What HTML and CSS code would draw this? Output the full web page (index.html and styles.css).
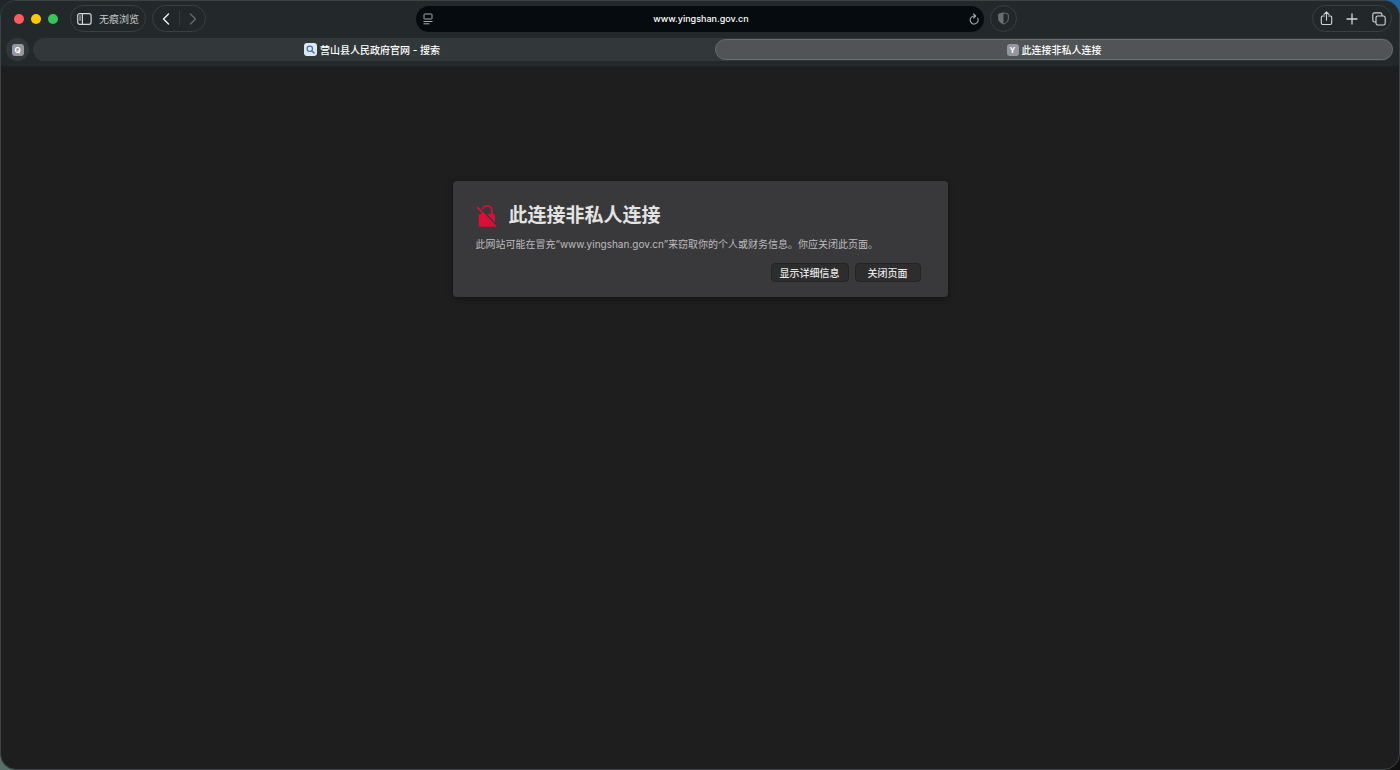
FILE: index.html
```html
<!DOCTYPE html>
<html lang="zh">
<head>
<meta charset="utf-8">
<meta name="viewport" content="width=device-width, initial-scale=1">
<title>此连接非私人连接</title>
<link rel="stylesheet" href="styles.css">
</head>
<body>
<div class="window">
  <header class="chrome">
    <div class="toolbar">
      <div class="toolbar-left">
        <div class="lights">
          <button class="light light-close" aria-label="关闭"></button>
          <button class="light light-min" aria-label="最小化"></button>
          <button class="light light-zoom" aria-label="缩放"></button>
        </div>
        <button class="pill private">
          <svg width="15" height="12" viewBox="0 0 15 12" fill="none" stroke="currentColor" stroke-width="1.2"><rect x=".7" y=".7" width="13.4" height="10.6" rx="2"/><path d="M5.4 .7v10.6M2.3 3h1.5M2.3 4.9h1.5M2.3 6.8h1.5"/></svg>
          <span>无痕浏览</span>
        </button>
        <div class="pill nav">
          <button class="nav-button" aria-label="后退"><svg width="8" height="12" viewBox="0 0 8 12" fill="none" stroke="currentColor" stroke-width="1.4" stroke-linecap="round" stroke-linejoin="round"><path d="M6.5 1 1.5 6l5 5"/></svg></button>
          <button class="nav-button nav-forward" aria-label="前进" disabled><svg width="8" height="12" viewBox="0 0 8 12" fill="none" stroke="currentColor" stroke-width="1.4" stroke-linecap="round" stroke-linejoin="round"><path d="m1.5 1 5 5-5 5"/></svg></button>
        </div>
      </div>
      <div class="address">
        <button class="icon-button" aria-label="页面菜单"><svg width="10" height="12" viewBox="0 0 10 12" fill="none" stroke="currentColor"><rect x="1" y="1" width="8" height="5" rx=".6"/><path d="M.5 8.5h9M.5 10.8h6"/></svg></button>
        <input class="address-input" type="text" value="www.yingshan.gov.cn" aria-label="地址">
        <button class="icon-button" aria-label="重新载入"><svg width="10" height="12" viewBox="0 0 10 12" fill="none" stroke="currentColor" stroke-width="1.1" stroke-linecap="round" stroke-linejoin="round"><path d="M8.7 5.2A4 4 0 1 1 5 3h1M4.6 1l2 2-2 2"/></svg></button>
      </div>
      <div class="toolbar-right">
        <button class="pill shield" aria-label="隐私报告"><svg width="11" height="13" viewBox="0 0 11 13"><path d="M5.5 .8 10.3 2.2v4.600c0 2.400-2.100 4.200-4.800 5.300C2.800 11 .7 9.200 .7 6.800V2.200Z" fill="none" stroke="currentColor"/><path d="M5.500 .8v11.300C2.800 11 .7 9.200 .7 6.800V2.200Z" fill="currentColor"/></svg></button>
        <div class="pill actions">
          <button class="icon-button" aria-label="共享"><svg width="13" height="15" viewBox="0 0 13 15" fill="none" stroke="currentColor" stroke-width="1.1" stroke-linecap="round" stroke-linejoin="round"><path d="M4.3 5H2.7Q1.3 5 1.3 6.4v5.7q0 1.4 1.4 1.4h7.6q1.4 0 1.4-1.4V6.4Q11.7 5 10.3 5H8.7M6.5 9.3V1M4 3.3 6.5 .9 9 3.3"/></svg></button>
          <button class="icon-button" aria-label="新建标签页"><svg width="12" height="12" viewBox="0 0 12 12" fill="none" stroke="currentColor" stroke-width="1.3" stroke-linecap="round"><path d="M6 1v10M1 6h10"/></svg></button>
          <button class="icon-button" aria-label="标签页概览"><svg width="14" height="14" viewBox="0 0 14 14" fill="none" stroke="currentColor" stroke-width="1.1"><rect x="4" y="4" width="9.2" height="9" rx="1.8"/><path d="M4 10H2.6Q.8 10 .8 8.2V2.7Q.8 .9 2.6 .9h5.6Q10 .9 10 2.7V4"/></svg></button>
        </div>
      </div>
    </div>
    <nav class="tabbar">
      <button class="pinned" aria-label="Q"><span class="favicon">Q</span></button>
      <div class="tabs">
        <button class="tab"><svg width="13" height="13" viewBox="0 0 13 13"><rect width="13" height="13" rx="3" fill="#dfe8f1"/><circle cx="5.8" cy="5.8" r="2.7" fill="none" stroke="#3b72b8" stroke-width="1.2"/><path d="m7.9 7.9 2.2 2.2" stroke="#3b72b8" stroke-width="1.4" stroke-linecap="round"/></svg>营山县人民政府官网 - 搜索</button>
        <button class="tab tab-active"><span class="favicon">Y</span>此连接非私人连接</button>
      </div>
    </nav>
  </header>
  <main class="page">
    <section class="warning">
      <div class="warning-title">
        <svg width="22" height="24" viewBox="0 0 22 24"><path d="M6.3 11V6.700a4.800 4.800 0 0 1 9.600 0V11" fill="none" stroke="#d90f38" stroke-width="1.8"/><rect x="2.7" y="10" width="16.3" height="12.7" rx="1.8" fill="#d90f38"/><path d="m2.200 1.900 19 20.500" stroke="#39393b" stroke-width="2"/><path d="M1.200 3.200 20.300 23" stroke="#d90f38" stroke-width="1.7"/></svg>
        <h1>此连接非私人连接</h1>
      </div>
      <p>此网站可能在冒充“www.yingshan.gov.cn”来窃取你的个人或财务信息。你应关闭此页面。</p>
      <div class="warning-buttons">
        <button class="button">显示详细信息</button>
        <button class="button button-wide">关闭页面</button>
      </div>
    </section>
  </main>
</div>
</body>
</html>
```
FILE: styles.css
```css
* {
  box-sizing: border-box;
}

body {
  margin: 0;
  background: linear-gradient(to right, #20262a 50%, #2268a0 50%) top / 100% 50% no-repeat,
    linear-gradient(to right, #58706a 50%, #101010 50%) bottom / 100% 50% no-repeat;
  font-family: Inter, "Noto Sans CJK SC", sans-serif;
  font-size: 10px;
  color: #fff;
}

button,
input {
  margin: 0;
  padding: 0;
  border: 0;
  background: none;
  color: inherit;
  font: inherit;
}

svg {
  display: block;
  flex: none;
}

.window {
  display: flex;
  flex-direction: column;
  min-height: 100vh;
  border: 1px solid #3d4344;
  border-radius: 16px;
  background: #1e1e1e;
  overflow: hidden;
}

.chrome {
  background: #23292b;
  border-bottom: 1px solid #1b1f20;
}

.toolbar {
  display: grid;
  grid-template-columns: 1fr 41% 1fr;
  align-items: center;
  gap: 6px;
  padding: 4px 7px;
}

.toolbar-left,
.toolbar-right,
.lights,
.pill {
  display: flex;
  align-items: center;
}

.toolbar-left {
  gap: 6px;
  padding-left: 6px;
}

.toolbar-right {
  justify-content: space-between;
}

.lights {
  gap: 7px;
  padding-right: 6px;
}

.light {
  width: 10px;
  height: 10px;
  border-radius: 50%;
}

.light-close {
  background: #ff5b60;
}

.light-min {
  background: #fdc600;
}

.light-zoom {
  background: #35c759;
}

.pill {
  height: 27px;
  border: 1px solid #394143;
  border-radius: 14px;
  background: #22282a;
}

.private {
  gap: 7px;
  padding: 0 6px;
  color: #c5c8c9;
}

.private svg {
  color: #d4d6d7;
}

.nav-button {
  display: grid;
  place-items: center;
  width: 26px;
  height: 15px;
  color: #f0f2f2;
}

.nav-forward {
  border-left: 1px solid #34393b;
  color: #646a6c;
}

.address {
  display: flex;
  align-items: center;
  height: 26px;
  padding: 0 4px 0 6px;
  border-radius: 13px;
  background: #050b0e;
}

.icon-button {
  display: grid;
  place-items: center;
  flex: none;
  width: 12px;
  height: 20px;
  color: #a5a9aa;
}

.address-input {
  flex: 1;
  min-width: 0;
  text-align: center;
  font-size: 9px;
  font-weight: 500;
  outline: 0;
}

.shield {
  justify-content: center;
  width: 27px;
  color: #6a7072;
}

.actions {
  gap: 14px;
  padding: 0 7px;
}

.actions .icon-button {
  color: #d4d6d7;
}

.tabbar {
  display: flex;
  align-items: center;
  gap: 4px;
  padding: 2px 6px 5px 5px;
}

.pinned {
  display: grid;
  place-items: center;
  width: 23px;
  height: 23px;
  border-radius: 50%;
  background: #32383a;
}

.favicon {
  display: grid;
  place-items: center;
  width: 12px;
  height: 12px;
  border-radius: 3px;
  background: #9496a0;
  color: #fff;
  font-size: 8px;
  font-weight: 700;
  line-height: 12px;
}

.tabs {
  display: grid;
  grid-template-columns: 1fr 1fr;
  column-gap: 4px;
  flex: 1;
  border-radius: 12px;
  background: #32383a;
}

.tab {
  display: flex;
  align-items: center;
  justify-content: center;
  gap: 3px;
  height: 23px;
  font-weight: 500;
}

.tab-active {
  height: 21px;
  align-self: center;
  border: 1px solid #6a6f71;
  border-radius: 11px;
  background: #505456;
}

.page {
  flex: 1;
  padding: 114px 16px 16px;
}

.warning {
  max-width: 495px;
  margin: 0 auto;
  padding: 22px 27px 15px 23px;
  border-radius: 4px;
  background: #39393b;
  box-shadow: 0 1px 6px rgba(0, 0, 0, 0.4);
}

.warning-title {
  display: flex;
  align-items: center;
  gap: 11px;
}

h1 {
  margin: 0;
  font-size: 19px;
  font-weight: 700;
  line-height: 26px;
  color: #e3e3e4;
}

p {
  margin: 7px 0 11px;
  line-height: 16px;
  color: #bdbdbe;
}

.warning-buttons {
  display: flex;
  justify-content: flex-end;
  gap: 6px;
}

.button {
  height: 19px;
  padding: 0 8px;
  border: 1px solid #242424;
  border-radius: 4px;
  background: #2d2d2e;
  color: #e6e6e6;
  font-weight: 500;
}

.button-wide {
  padding: 0 12px;
}
```
